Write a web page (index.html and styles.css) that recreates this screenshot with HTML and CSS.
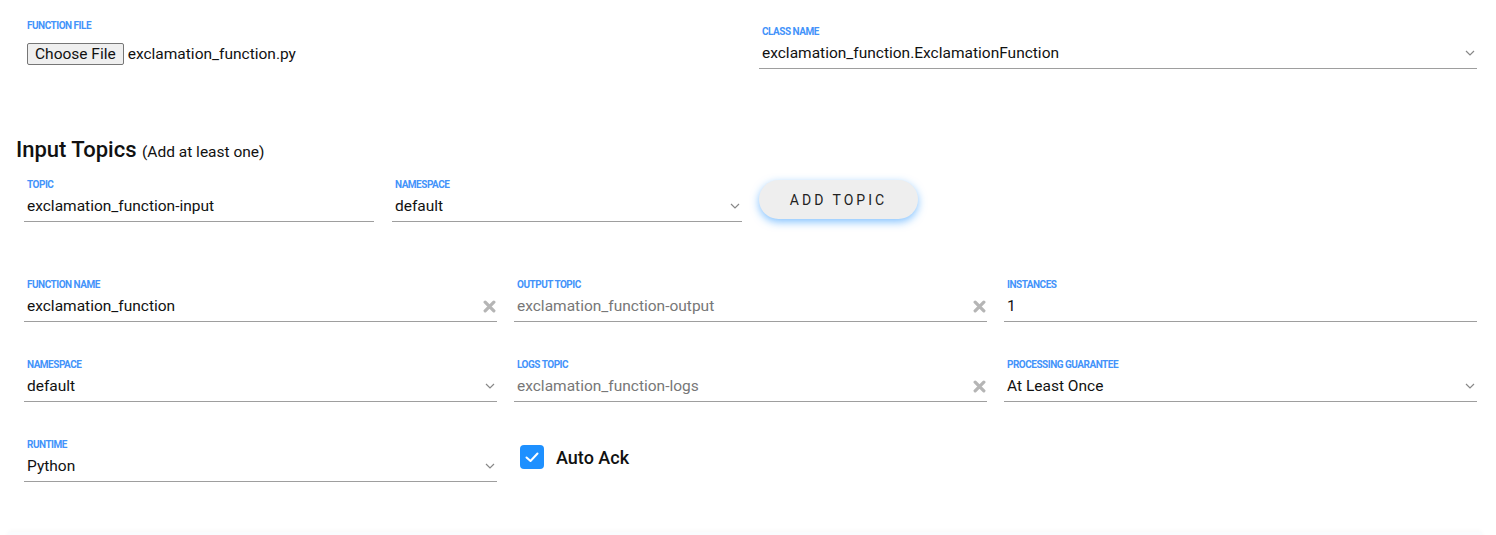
FILE: index.html
```html
<!DOCTYPE html>
<html lang="en">
<head>
  <meta charset="UTF-8" />
  <title>Create Function</title>
  <link rel="stylesheet" href="styles.css">
</head>
<body>
  <div class="page">
    <div class="top-row">
      <div class="file-field">
        <div class="field-label">Function File</div>
        <div class="file-picker">
          <button class="file-btn" type="button">Choose File</button>
          <span class="file-name">exclamation_function.py</span>
        </div>
      </div>
      <div class="field class-field">
        <div class="field-label">Class Name</div>
        <div class="field-input">
          <span class="value">exclamation_function.ExclamationFunction</span>
          <svg class="chevron" viewBox="0 0 10 6"><polyline points="1,1 5,5 9,1" /></svg>
        </div>
      </div>
    </div>

    <h2 class="section-title">Input Topics <small>(Add at least one)</small></h2>
    <div class="topic-row">
      <div class="field topic-field">
        <div class="field-label">Topic</div>
        <div class="field-input"><span class="value">exclamation_function-input</span></div>
      </div>
      <div class="field topic-field">
        <div class="field-label">Namespace</div>
        <div class="field-input">
          <span class="value">default</span>
          <svg class="chevron" viewBox="0 0 10 6"><polyline points="1,1 5,5 9,1" /></svg>
        </div>
      </div>
      <button class="add-topic" type="button">Add Topic</button>
    </div>

    <div class="form-grid">
      <div class="field">
        <div class="field-label">Function Name</div>
        <div class="field-input">
          <span class="value">exclamation_function</span>
          <svg class="clear" viewBox="0 0 12 12"><path d="M2 2L10 10M10 2L2 10" /></svg>
        </div>
      </div>
      <div class="field">
        <div class="field-label">Output Topic</div>
        <div class="field-input">
          <span class="value placeholder">exclamation_function-output</span>
          <svg class="clear" viewBox="0 0 12 12"><path d="M2 2L10 10M10 2L2 10" /></svg>
        </div>
      </div>
      <div class="field">
        <div class="field-label">Instances</div>
        <div class="field-input"><span class="value">1</span></div>
      </div>

      <div class="field">
        <div class="field-label">Namespace</div>
        <div class="field-input">
          <span class="value">default</span>
          <svg class="chevron" viewBox="0 0 10 6"><polyline points="1,1 5,5 9,1" /></svg>
        </div>
      </div>
      <div class="field">
        <div class="field-label">Logs Topic</div>
        <div class="field-input">
          <span class="value placeholder">exclamation_function-logs</span>
          <svg class="clear" viewBox="0 0 12 12"><path d="M2 2L10 10M10 2L2 10" /></svg>
        </div>
      </div>
      <div class="field">
        <div class="field-label">Processing Guarantee</div>
        <div class="field-input">
          <span class="value">At Least Once</span>
          <svg class="chevron" viewBox="0 0 10 6"><polyline points="1,1 5,5 9,1" /></svg>
        </div>
      </div>

      <div class="field">
        <div class="field-label">Runtime</div>
        <div class="field-input">
          <span class="value">Python</span>
          <svg class="chevron" viewBox="0 0 10 6"><polyline points="1,1 5,5 9,1" /></svg>
        </div>
      </div>
      <label class="check-field">
        <span class="checkbox">
          <svg viewBox="0 0 24 24"><polyline points="6.5,12.5 10.5,16 17.5,8.5" /></svg>
        </span>
        Auto Ack
      </label>
    </div>
  </div>
  <div class="next-card"></div>
</body>
</html>
```

FILE: styles.css
```css
body {
  margin: 0;
  font-family: Roboto, "Liberation Sans", sans-serif;
  color: #111;
  background: #fff;
  overflow: hidden;
}
.page {
  padding: 20px 19px 0 24px;
}
.top-row {
  display: grid;
  grid-template-columns: 1fr 1fr;
  column-gap: 17px;
}
.field-label {
  font-size: 10px;
  line-height: 12px;
  font-weight: 700;
  text-transform: uppercase;
  letter-spacing: -0.5px;
  color: #4393fa;
  padding-left: 3px;
}
.file-picker {
  display: flex;
  align-items: center;
  gap: 4px;
  margin-top: 11px;
  padding-left: 3px;
}
.file-btn {
  font-family: Roboto, "Liberation Sans", sans-serif;
  font-size: 15.5px;
  height: 22px;
  padding: 0 7px;
  background: #efefef;
  border: 1px solid #767676;
  border-radius: 2px;
  color: #111;
}
.file-name {
  font-size: 15.5px;
}
.class-field {
  margin-top: 6px;
}
.field-input {
  display: flex;
  align-items: center;
  height: 30px;
  border-bottom: 1px solid #9e9e9e;
  padding: 0 3px;
}
.value {
  flex: 1;
  font-size: 15.5px;
  white-space: nowrap;
}
.value.placeholder {
  color: #777;
}
.chevron {
  width: 10px;
  height: 6px;
  fill: none;
  stroke: #888;
  stroke-width: 1.2;
  margin-right: -1px;
}
.clear {
  width: 13px;
  height: 13px;
  stroke: #b5b5b5;
  stroke-width: 3;
  stroke-linecap: round;
  margin-right: -2px;
}
.section-title {
  margin: 68px 0 0 -8px;
  font-size: 22px;
  font-weight: 500;
  line-height: 26px;
}
.section-title small {
  font-size: 15.5px;
  font-weight: 400;
}
.topic-row {
  display: flex;
  align-items: flex-start;
  gap: 18px;
  margin-top: 14px;
}
.topic-field {
  width: 350px;
}
.add-topic {
  width: 159px;
  height: 39px;
  border: none;
  border-radius: 20px;
  background: #eee;
  box-shadow: 0 3px 8px rgba(30, 144, 255, 0.55);
  font-family: Roboto, "Liberation Sans", sans-serif;
  font-size: 14px;
  text-transform: uppercase;
  letter-spacing: 3px;
  color: #222;
  margin: 1px 0 0 -1px;
}
.form-grid {
  display: grid;
  grid-template-columns: repeat(3, 1fr);
  column-gap: 17px;
  row-gap: 37px;
  margin-top: 57px;
}
.check-field {
  display: flex;
  align-items: center;
  gap: 12px;
  font-size: 18px;
  font-weight: 500;
  padding-left: 6px;
  margin-top: 6px;
  align-self: start;
  height: 24px;
}
.checkbox {
  width: 24px;
  height: 24px;
  border-radius: 4px;
  background: #1e90ff;
  display: flex;
}
.checkbox svg {
  width: 24px;
  height: 24px;
  fill: none;
  stroke: #fff;
  stroke-width: 2;
  stroke-linecap: round;
  stroke-linejoin: round;
}
.next-card {
  margin: 50px 14px 0 8px;
  height: 10px;
  background: #fafcfe;
  box-shadow: 0 -1px 5px rgba(0, 0, 0, 0.03);
}
```
